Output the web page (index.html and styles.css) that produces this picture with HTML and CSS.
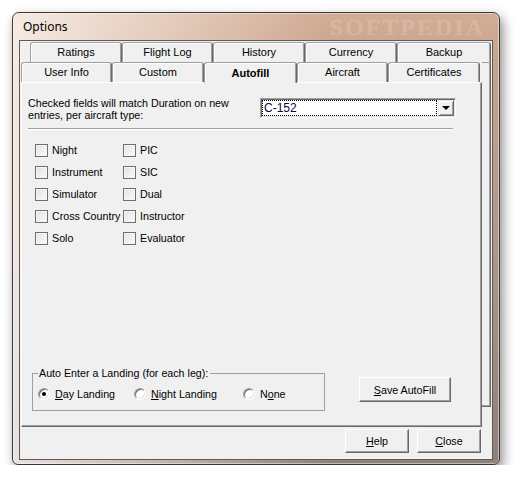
FILE: index.html
```html
<!DOCTYPE html>
<html>
<head>
<meta charset="utf-8">
<link rel="stylesheet" href="styles.css">
</head>
<body>
<div class="window">
  <div class="titlebar">
    <span class="title">Options</span>
    <span class="wm">SOFTPEDIA</span>
  </div>
  <div class="client">
    <div class="tabctl">
      <div class="row row1">
        <div class="tab w92">Ratings</div>
        <div class="tab w91">Flight Log</div>
        <div class="tab w92">History</div>
        <div class="tab w92">Currency</div>
        <div class="tab w94">Backup</div>
      </div>
      <div class="body">
        <div class="front">
          <div class="row row2">
            <div class="tab w91">User Info</div>
            <div class="tab w92">Custom</div>
            <div class="tab w93 sel">Autofill</div>
            <div class="tab w91">Aircraft</div>
            <div class="tab w92">Certificates</div>
          </div>
          <div class="panel">
            <div class="intro">
              <div class="intro-label">Checked fields will match Duration on new<br>entries, per aircraft type:</div>
              <div class="combo">
                <div class="combo-field">C-152</div>
                <div class="combo-btn"><span class="tri"></span></div>
              </div>
            </div>
            <div class="sep"></div>
            <div class="checks">
              <div class="chk"><span class="box"></span>Night</div>
              <div class="chk"><span class="box"></span>PIC</div>
              <div class="chk"><span class="box"></span>Instrument</div>
              <div class="chk"><span class="box"></span>SIC</div>
              <div class="chk"><span class="box"></span>Simulator</div>
              <div class="chk"><span class="box"></span>Dual</div>
              <div class="chk"><span class="box"></span>Cross Country</div>
              <div class="chk"><span class="box"></span>Instructor</div>
              <div class="chk"><span class="box"></span>Solo</div>
              <div class="chk"><span class="box"></span>Evaluator</div>
            </div>
            <div class="bottom">
              <fieldset class="group">
                <legend class="legend">Auto Enter a Landing (for each leg):</legend>
                <div class="radios">
                  <div class="radio r1"><span class="rb on"></span><span><u>D</u>ay Landing</span></div>
                  <div class="radio r2"><span class="rb"></span><span><u>N</u>ight Landing</span></div>
                  <div class="radio"><span class="rb"></span><span>N<u>o</u>ne</span></div>
                </div>
              </fieldset>
              <div class="btn save"><u>S</u>ave AutoFill</div>
            </div>
          </div>
        </div>
        <div class="strip"></div>
      </div>
    </div>
    <div class="buttons">
      <div class="btn small"><u>H</u>elp</div>
      <div class="btn small"><u>C</u>lose</div>
    </div>
  </div>
</div>
</body>
</html>
```
FILE: styles.css
```css
html, body {
  margin: 0;
  padding: 0;
  background: #ffffff;
}

body {
  font-family: "Liberation Sans", Arial, sans-serif;
  font-size: 10.7px;
  color: #000;
}

.window {
  margin: 12px 0 0 12px;
  width: 488px;
  height: 453px;
  box-sizing: border-box;
  border: 1px solid #3c3634;
  border-radius: 7px 7px 6px 6px;
  padding: 0 6px 4px 6px;
  display: flex;
  flex-direction: column;
  position: relative;
  overflow: hidden;
  background:
    linear-gradient(90deg, rgba(255, 250, 246, 0.8) 0%, rgba(255, 248, 242, 0.45) 30%, rgba(255, 255, 255, 0) 65%),
    linear-gradient(180deg, #d2ac95 0%, #c8a38c 12%, #ad958a 55%, #8e807b 100%);
  box-shadow: 3px 5px 12px rgba(0, 0, 0, 0.45), inset 0 0 0 1px rgba(255, 255, 255, 0.45);
}

.titlebar {
  height: 27px;
  display: flex;
  align-items: center;
  padding-left: 4px;
  position: relative;
}

.title {
  font-family: "Noto Sans", "Open Sans", sans-serif;
  font-size: 12px;
  color: #000;
}

.wm {
  position: absolute;
  right: 8px;
  top: 1px;
  font-family: "Liberation Serif", serif;
  font-weight: bold;
  font-size: 24px;
  line-height: 26px;
  letter-spacing: 2px;
  color: rgba(255, 255, 255, 0.18);
}

.client {
  flex: 1;
  border: 1px solid #5e5a58;
  background: #f0f0f0;
  display: flex;
  flex-direction: column;
}

.tabctl {
  margin: 1px 0 0 1px;
}

.row {
  display: flex;
  height: 20px;
}

.row1 {
  padding-left: 9px;
}

.tab {
  box-sizing: border-box;
  height: 20px;
  border-top: 1px solid #a0a0a0;
  border-left: 1px solid #a0a0a0;
  border-right: 1px solid #696969;
  border-radius: 3px 3px 0 0;
  box-shadow: inset 1px 1px #ffffff, inset -1px 0 #a0a0a0;
  background: #f0f0f0;
  text-align: center;
  line-height: 18px;
  white-space: nowrap;
  font-size: 11px;
}

.w91 { width: 91px; }
.w92 { width: 92px; }
.w93 { width: 93px; }
.w94 { width: 94px; }

.tab.sel {
  height: 21px;
  margin-bottom: -1px;
  position: relative;
  z-index: 1;
  font-weight: bold;
  line-height: 20px;
}

.body {
  display: flex;
  align-items: flex-start;
}

.front {
  width: 461px;
}

.strip {
  width: 9px;
  height: 345px;
  box-sizing: border-box;
  border-right: 1px solid #696969;
  border-bottom: 1px solid #696969;
  border-top: 1px solid #a0a0a0;
  box-shadow: inset -1px -1px #a0a0a0;
}

.panel {
  box-sizing: border-box;
  height: 345px;
  border-top: 1px solid #ffffff;
  border-left: 1px solid #ffffff;
  border-right: 1px solid #696969;
  border-bottom: 1px solid #696969;
  box-shadow: inset -1px -1px #a0a0a0;
  padding: 14px 0 15px 6px;
  display: flex;
  flex-direction: column;
}

.intro {
  display: flex;
  align-items: flex-start;
}

.intro-label {
  width: 232px;
  line-height: 12px;
}

.combo {
  width: 196px;
  height: 20px;
  margin-top: 1px;
  box-sizing: border-box;
  border: 1px solid;
  border-color: #a0a0a0 #ffffff #ffffff #a0a0a0;
  box-shadow: inset 1px 1px #696969, inset -1px -1px #e3e3e3;
  background: #ffffff;
  display: flex;
  padding: 1px;
}

.combo-field {
  flex: 1;
  border: 1px dotted #000;
  font-size: 12px;
  line-height: 14px;
  padding-left: 1px;
  color: #0a0a30;
}

.combo-btn {
  width: 16px;
  margin-left: 1px;
  box-sizing: border-box;
  border: 1px solid;
  border-color: #e3e3e3 #696969 #696969 #e3e3e3;
  box-shadow: inset 1px 1px #ffffff, inset -1px -1px #a0a0a0;
  background: #f0f0f0;
  display: flex;
  align-items: center;
  justify-content: center;
}

.tri {
  width: 0;
  height: 0;
  border-left: 4px solid transparent;
  border-right: 4px solid transparent;
  border-top: 4px solid #000;
}

.sep {
  margin-top: 7px;
  width: 425px;
  border-top: 1px solid #a0a0a0;
  border-bottom: 1px solid #ffffff;
}

.checks {
  display: grid;
  grid-template-columns: 88px auto;
  grid-auto-rows: 22px;
  margin-top: 9px;
  padding-left: 7px;
}

.chk {
  display: flex;
  align-items: center;
  gap: 4px;
  white-space: nowrap;
}

.box {
  width: 13px;
  height: 13px;
  box-sizing: border-box;
  border: 1px solid #6f6f6f;
  background: linear-gradient(135deg, #e2e2e2 0%, #fbfbfb 100%);
  box-shadow: inset 0 0 0 1px #f6f6f6;
  flex: none;
}

.bottom {
  margin-top: auto;
  display: flex;
  align-items: flex-start;
  padding-left: 4px;
}

.group {
  margin: 0;
  padding: 0 0 0 5px;
  min-width: 0;
  width: 293px;
  height: 44px;
  box-sizing: border-box;
  border: 1px solid #a0a0a0;
}

.legend {
  padding: 0 2px 0 1px;
  line-height: 13px;
}

.radios {
  display: flex;
  align-items: center;
  height: 14px;
  margin-top: 7px;
}

.radio {
  display: flex;
  align-items: center;
  gap: 5px;
  white-space: nowrap;
}

.r1 { width: 96px; }
.r2 { width: 109px; }

.rb {
  width: 12px;
  height: 12px;
  box-sizing: border-box;
  border-radius: 50%;
  border: 1px solid;
  border-color: #a0a0a0 #ffffff #ffffff #a0a0a0;
  box-shadow: inset 1px 1px #696969, inset -1px -1px #e3e3e3;
  background: #ffffff;
  position: relative;
  flex: none;
}

.rb.on::after {
  content: "";
  position: absolute;
  left: 3px;
  top: 3px;
  width: 4px;
  height: 4px;
  border-radius: 50%;
  background: #000;
}

.btn {
  box-sizing: border-box;
  border: 1px solid;
  border-color: #ffffff #696969 #696969 #ffffff;
  box-shadow: inset -1px -1px #a0a0a0;
  background: #f0f0f0;
  display: flex;
  align-items: center;
  justify-content: center;
  white-space: nowrap;
}

.save {
  margin-left: 34px;
  margin-top: 10px;
  width: 92px;
  height: 25px;
}

.buttons {
  display: flex;
  justify-content: flex-end;
  gap: 8px;
  padding: 2px 11px 0 0;
}

.small {
  width: 64px;
  height: 24px;
}
```
